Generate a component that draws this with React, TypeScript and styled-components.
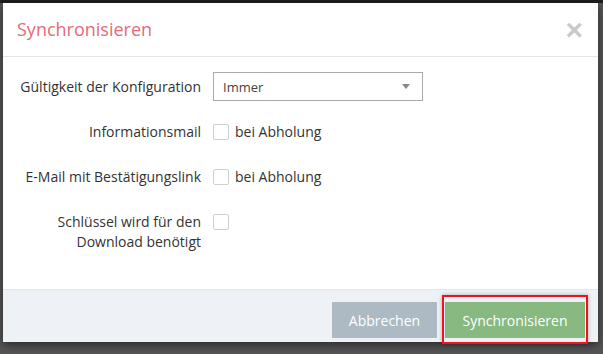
import React from "react";
import styled, { createGlobalStyle } from "styled-components";

const GlobalStyle = createGlobalStyle`
  html, body {
    margin: 0;
    padding: 0;
    height: 100%;
  }
  body {
    background: #4b4b4b;
    font-family: "Open Sans", "Liberation Sans", Arial, sans-serif;
    color: #333;
    overflow: hidden;
  }
`;

const Backdrop = styled.div`
  width: 603px;
  height: 354px;
  background: linear-gradient(#1e1e1e 0, #1e1e1e 3px, #555 3px);
  padding: 3px 0 0 3px;
  box-sizing: border-box;
`;

const Modal = styled.div`
  width: 595px;
  height: 339px;
  background: #fff;
  display: flex;
  flex-direction: column;
  box-shadow: 0 3px 9px rgba(0, 0, 0, 0.5);
`;

const Header = styled.div`
  display: flex;
  align-items: center;
  justify-content: space-between;
  height: 54px;
  box-sizing: border-box;
  padding: 0 15px 0 14px;
  border-bottom: 1px solid #e5e5e5;
`;

const Title = styled.h4`
  margin: 0;
  font-size: 18px;
  font-weight: 400;
  line-height: 25px;
  color: #e46b79;
`;

const Close = styled.button`
  border: 0;
  background: none;
  padding: 0;
  height: 25px;
  font-family: "Liberation Sans", Arial, sans-serif;
  font-size: 30px;
  font-weight: 700;
  line-height: 25px;
  color: #c9c9c9;
  cursor: pointer;
`;

const Body = styled.div`
  flex: 1;
  padding: 15px 15px 0;
`;

const Row = styled.div`
  display: grid;
  grid-template-columns: 183px 1fr;
  column-gap: 12px;
  margin-bottom: 15px;
  min-height: 30px;
`;

const Label = styled.label`
  text-align: right;
  font-size: 14px;
  line-height: 20px;
  padding-top: 5px;
`;

const Controls = styled.div`
  display: flex;
  align-items: flex-start;
`;

const Select = styled.div`
  width: 210px;
  height: 29px;
  box-sizing: border-box;
  border: 1px solid #aaa;
  display: flex;
  align-items: center;
  justify-content: space-between;
  padding: 0 12px 0 9px;
  font-size: 13px;
  color: #444;
`;

const Caret = styled.span`
  width: 0;
  height: 0;
  border-left: 4px solid transparent;
  border-right: 4px solid transparent;
  border-top: 5px solid #888;
`;

const CheckLabel = styled.label`
  display: flex;
  align-items: center;
  gap: 6px;
  margin-top: 7px;
  font-size: 14px;
  line-height: 16px;
`;

const Box = styled.span`
  width: 16px;
  height: 16px;
  box-sizing: border-box;
  border: 1px solid #cfcfcf;
  border-radius: 2px;
  background: #fff;
  flex: none;
`;

const Footer = styled.div`
  background: #eef2f7;
  border-top: 1px solid #e3e7ec;
  display: flex;
  justify-content: flex-end;
  align-items: flex-start;
  gap: 5px;
  padding: 5px 10px 0 0;
  height: 53px;
  box-sizing: border-box;
`;

const Button = styled.button<{ $variant: "cancel" | "primary" }>`
  height: 36px;
  border: 0;
  padding: 0 16px;
  font-family: "Open Sans", "Liberation Sans", Arial, sans-serif;
  font-size: 14px;
  color: #fff;
  background: ${(p) => (p.$variant === "primary" ? "#87b980" : "#adbac4")};
  cursor: pointer;
`;

const CancelButton = styled(Button)`
  width: 105px;
  margin-top: 7px;
`;

const PrimaryButton = styled(Button)`
  width: 140px;
`;

const Highlight = styled.div`
  border: 2px solid #f0131b;
  padding: 5px 1px 4px;
  box-shadow: 0 0 4px rgba(0, 0, 0, 0.3);
`;

const CheckRow = ({ label, text }: { label: React.ReactNode; text?: string }) => (
  <Row>
    <Label>{label}</Label>
    <Controls>
      <CheckLabel>
        <Box />
        {text}
      </CheckLabel>
    </Controls>
  </Row>
);

export default function App() {
  return (
    <>
      <GlobalStyle />
      <Backdrop>
        <Modal>
          <Header>
            <Title>Synchronisieren</Title>
            <Close aria-label="Schließen">×</Close>
          </Header>
          <Body>
            <Row>
              <Label>Gültigkeit der Konfiguration</Label>
              <Controls>
                <Select>
                  Immer
                  <Caret />
                </Select>
              </Controls>
            </Row>
            <CheckRow label="Informationsmail" text="bei Abholung" />
            <CheckRow label="E-Mail mit Bestätigungslink" text="bei Abholung" />
            <CheckRow
              label={
                <>
                  Schlüssel wird für den
                  <br />
                  Download benötigt
                </>
              }
            />
          </Body>
          <Footer>
            <CancelButton $variant="cancel">Abbrechen</CancelButton>
            <Highlight>
              <PrimaryButton $variant="primary">Synchronisieren</PrimaryButton>
            </Highlight>
          </Footer>
        </Modal>
      </Backdrop>
    </>
  );
}
